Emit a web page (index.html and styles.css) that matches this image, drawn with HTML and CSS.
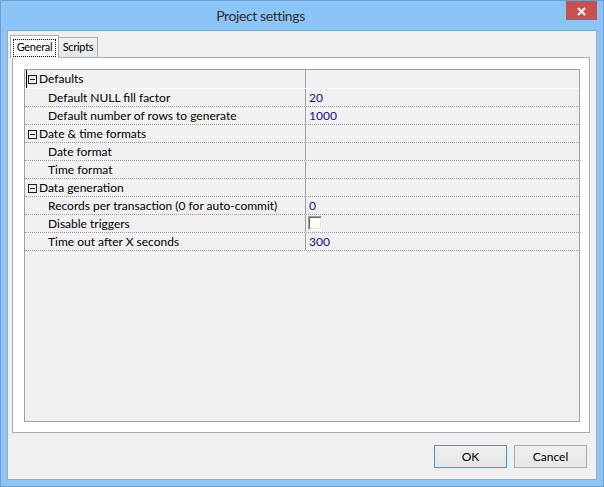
FILE: index.html
```html
<!DOCTYPE html>
<html>
<head>
<meta charset="utf-8">
<title>Project settings</title>
<link rel="stylesheet" href="styles.css">
</head>
<body>
<div class="window">
  <div class="titlebar">
    <span class="title">Project settings</span>
    <span class="close"><svg width="9" height="9" viewBox="0 0 9 9"><path d="M1 1L8 8M8 1L1 8" stroke="#fff" stroke-width="2"/></svg></span>
  </div>
  <div class="client">
    <div class="tabs">
      <div class="tab active"><span class="focus">General</span></div>
      <div class="tab">Scripts</div>
    </div>
    <div class="panel">
      <div class="grid">
        <div class="row group first">
          <div class="label"><span class="caret on"></span><span class="box"><svg width="9" height="9" viewBox="0 0 9 9"><rect x="0.5" y="0.5" width="8" height="8" fill="none" stroke="#1e1e1e"/><path d="M2 4.5H7" stroke="#1e1e1e"/></svg></span><span>Defaults</span></div>
          <div class="value"></div>
        </div>
        <div class="row">
          <div class="label sub">Default NULL fill factor</div>
          <div class="value">20</div>
        </div>
        <div class="row">
          <div class="label sub">Default number of rows to generate</div>
          <div class="value">1000</div>
        </div>
        <div class="row group">
          <div class="label"><span class="caret"></span><span class="box"><svg width="9" height="9" viewBox="0 0 9 9"><rect x="0.5" y="0.5" width="8" height="8" fill="none" stroke="#1e1e1e"/><path d="M2 4.5H7" stroke="#1e1e1e"/></svg></span><span>Date &amp; time formats</span></div>
          <div class="value"></div>
        </div>
        <div class="row">
          <div class="label sub">Date format</div>
          <div class="value"></div>
        </div>
        <div class="row">
          <div class="label sub">Time format</div>
          <div class="value"></div>
        </div>
        <div class="row group">
          <div class="label"><span class="caret"></span><span class="box"><svg width="9" height="9" viewBox="0 0 9 9"><rect x="0.5" y="0.5" width="8" height="8" fill="none" stroke="#1e1e1e"/><path d="M2 4.5H7" stroke="#1e1e1e"/></svg></span><span>Data generation</span></div>
          <div class="value"></div>
        </div>
        <div class="row">
          <div class="label sub">Records per transaction (0 for auto-commit)</div>
          <div class="value">0</div>
        </div>
        <div class="row">
          <div class="label sub">Disable triggers</div>
          <div class="value"><span class="checkbox"></span></div>
        </div>
        <div class="row">
          <div class="label sub">Time out after X seconds</div>
          <div class="value">300</div>
        </div>
      </div>
    </div>
    <div class="buttons">
      <button class="btn default">OK</button>
      <button class="btn">Cancel</button>
    </div>
  </div>
</div>
</body>
</html>
```
FILE: styles.css
```css
html, body {
  margin: 0;
  padding: 0;
}
body {
  width: 604px;
  height: 487px;
  overflow: hidden;
  font-family: "Lato", "Liberation Sans", sans-serif;
  font-size: 12px;
  color: #000;
}
.window {
  box-sizing: border-box;
  width: 604px;
  height: 487px;
  background: #8bc4f7;
  border: 1px solid #6f9fcd;
  display: flex;
  flex-direction: column;
}
.titlebar {
  height: 29px;
  display: flex;
  align-items: center;
}
.title {
  flex: 1;
  text-align: center;
  padding-right: 46px;
  font-size: 14px;
  letter-spacing: -0.4px;
  color: #2e2e2e;
}
.close {
  align-self: flex-start;
  width: 31px;
  height: 19px;
  margin-right: 6px;
  background: #c75050;
  display: flex;
  align-items: center;
  justify-content: center;
}
.close svg {
  display: block;
  margin-top: 1px;
}
.client {
  box-sizing: border-box;
  margin: 0 6px;
  height: 450px;
  background: #f0f0f0;
  border: 1px solid #a7a7a7;
  border-top-color: #78a8d8;
  display: flex;
  flex-direction: column;
}
.tabs {
  display: flex;
  align-items: flex-end;
  height: 22px;
  padding: 4px 0 0 2px;
  font-size: 11px;
  letter-spacing: -0.3px;
}
.tab {
  box-sizing: border-box;
  height: 20px;
  width: 39px;
  border-top: 1px solid #acacac;
  border-right: 1px solid #acacac;
  background: linear-gradient(#f2f2f2, #e6e6e6);
  text-align: center;
  line-height: 18px;
}
.tab.active {
  width: 49px;
  height: 23px;
  margin-bottom: -1px;
  border-left: 1px solid #acacac;
  background: #fff;
  position: relative;
  z-index: 1;
  text-align: left;
}
.focus {
  display: block;
  box-sizing: border-box;
  width: 43px;
  height: 18px;
  margin: 3px 0 0 2px;
  border: 1px dotted #000;
  line-height: 14px;
  text-align: center;
}
.panel {
  box-sizing: border-box;
  height: 376px;
  margin: 0 6px 0 4px;
  background: #fff;
  border: 1px solid #adadad;
  display: flex;
  flex-direction: column;
  padding: 11px 9px 10px 11px;
}
.grid {
  flex: 1;
  background: #f0f0f0;
  border: 1px solid #a0a0a0;
}
.row {
  display: flex;
  height: 18px;
  box-sizing: border-box;
  border-bottom: 1px dotted #9c9c9c;
  line-height: 17px;
}
.row.first {
  height: 19px;
  line-height: 18px;
  border-bottom: 1px solid #fcfcfc;
}
.label {
  box-sizing: border-box;
  width: 281px;
  border-right: 1px solid #a0a0a0;
  white-space: nowrap;
}
.label.sub {
  padding-left: 23px;
}
.row.group .label {
  display: flex;
  align-items: center;
}
.caret {
  align-self: stretch;
  width: 1px;
  margin-left: 1px;
}
.caret.on {
  background: #000;
}
.box {
  display: flex;
  margin: 1px 2px 0 1px;
}
.value {
  flex: 1;
  padding-left: 3px;
  color: #10108a;
}
.checkbox {
  display: block;
  box-sizing: border-box;
  width: 14px;
  height: 14px;
  margin: 1px 0 0 -1px;
  background: #fff;
  border: 1px solid;
  border-color: #a0a0a0 #fff #fff #a0a0a0;
  box-shadow: inset 1px 1px #696969, inset -1px -1px #e3e3e3;
}
.buttons {
  display: flex;
  justify-content: flex-end;
  gap: 7px;
  margin-top: 12px;
  padding-right: 9px;
}
.btn {
  box-sizing: border-box;
  width: 73px;
  height: 23px;
  padding: 0;
  font-family: "Lato", "Liberation Sans", sans-serif;
  font-size: 12px;
  color: #000;
  background: linear-gradient(#f0f0f0, #e5e5e5);
  border: 1px solid #acacac;
  border-radius: 0;
}
.btn.default {
  border-color: #3c99e8;
}
```
